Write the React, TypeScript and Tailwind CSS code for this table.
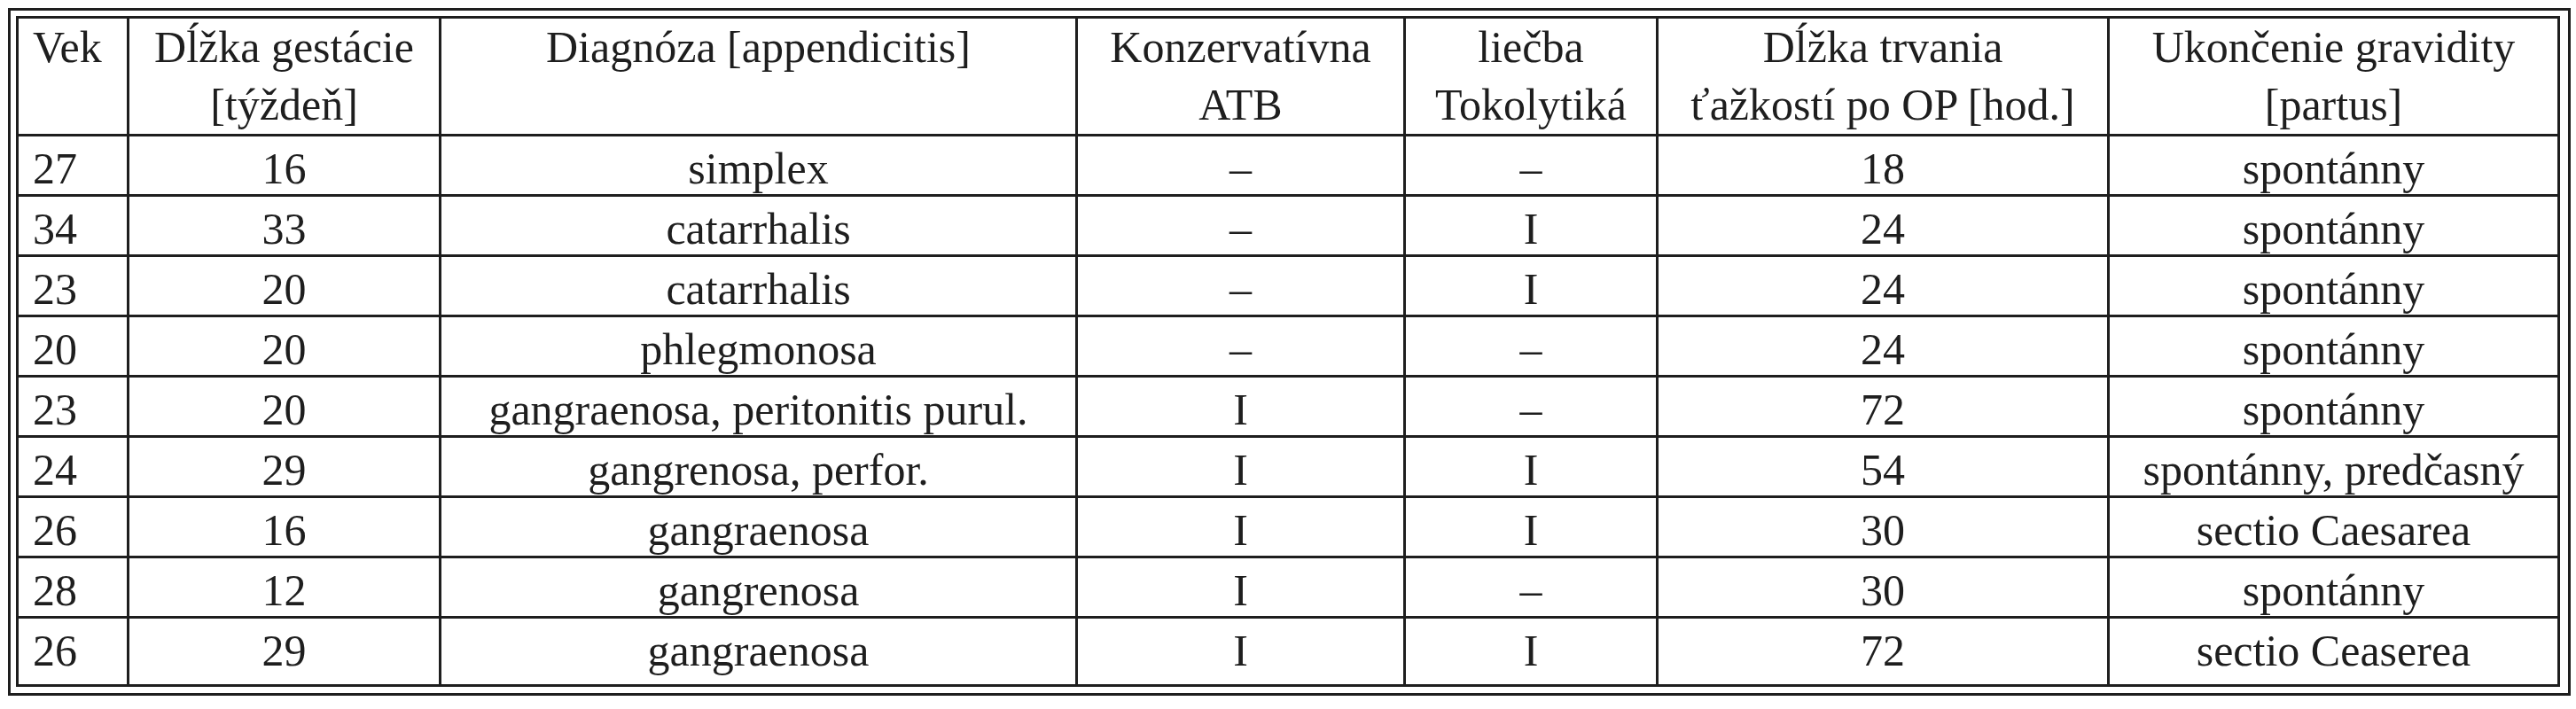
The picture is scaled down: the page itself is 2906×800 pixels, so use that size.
const rows = [
  ["27", "16", "simplex", "–", "–", "18", "spontánny"],
  ["34", "33", "catarrhalis", "–", "I", "24", "spontánny"],
  ["23", "20", "catarrhalis", "–", "I", "24", "spontánny"],
  ["20", "20", "phlegmonosa", "–", "–", "24", "spontánny"],
  ["23", "20", "gangraenosa, peritonitis purul.", "I", "–", "72", "spontánny"],
  ["24", "29", "gangrenosa, perfor.", "I", "I", "54", "spontánny, predčasný"],
  ["26", "16", "gangraenosa", "I", "I", "30", "sectio Caesarea"],
  ["28", "12", "gangrenosa", "I", "–", "30", "spontánny"],
  ["26", "29", "gangraenosa", "I", "I", "72", "sectio Ceaserea"],
];

const headers = [
  ["Vek"],
  ["Dĺžka gestácie", "[týždeň]"],
  ["Diagnóza [appendicitis]"],
  ["Konzervatívna", "ATB"],
  ["liečba", "Tokolytiká"],
  ["Dĺžka trvania", "ťažkostí po OP [hod.]"],
  ["Ukončenie gravidity", "[partus]"],
];

const widths = ["w-[125px]", "w-[352px]", "w-[718px]", "w-[370px]", "w-[285px]", "w-[509px]", "w-[508px]"];

export default function App() {
  return (
    <div className="min-h-screen bg-white pl-[9px] pt-[9px] font-['Liberation_Serif',serif] text-[50px] text-[#1e1e1e]">
      <div className="inline-block border-[3px] border-[#1e1e1e] pb-[7px] pl-[6px] pr-[9px] pt-[6px]">
        <table className="w-[2870px] table-fixed border-collapse border-[3px] border-[#1e1e1e]">
          <colgroup>
            {widths.map((w) => (
              <col key={w} className={w} />
            ))}
          </colgroup>
          <thead>
            <tr className="h-[133px]">
              {headers.map((h, i) => (
                <th
                  key={i}
                  className={`border-[3px] border-[#1e1e1e] align-top font-normal leading-[65px] ${
                    i === 0 ? "pl-[16px] text-left" : "text-center"
                  }`}
                >
                  {h.map((line) => (
                    <div key={line} className="whitespace-nowrap">
                      {line}
                    </div>
                  ))}
                </th>
              ))}
            </tr>
          </thead>
          <tbody>
            {rows.map((r, ri) => (
              <tr key={ri} className={ri === rows.length - 1 ? "h-[77px]" : "h-[68px]"}>
                {r.map((c, ci) => (
                  <td
                    key={ci}
                    className={`border-[3px] border-[#1e1e1e] pt-[11px] align-top leading-[50px] whitespace-nowrap ${
                      ci === 0 ? "pl-[16px] text-left" : "text-center"
                    }`}
                  >
                    {c}
                  </td>
                ))}
              </tr>
            ))}
          </tbody>
        </table>
      </div>
    </div>
  );
}
